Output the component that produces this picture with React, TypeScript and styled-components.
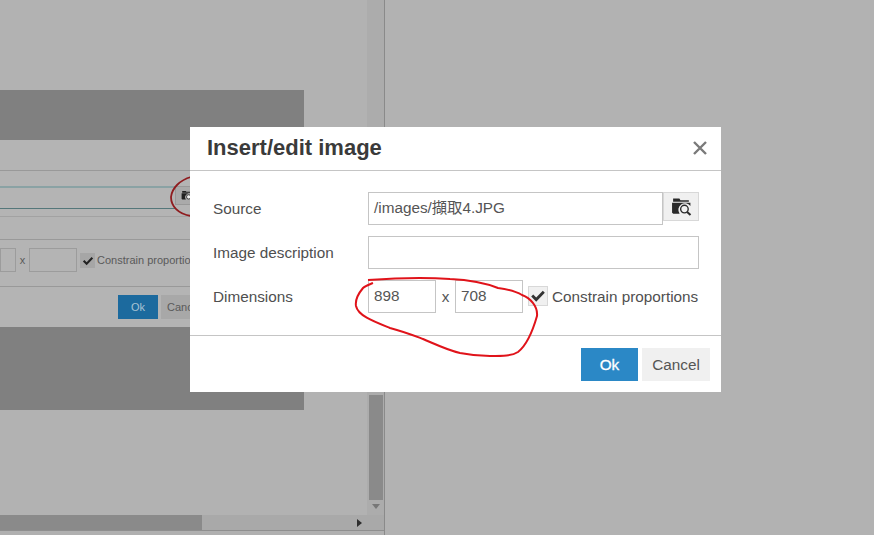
import React from "react";
import styled, { createGlobalStyle } from "styled-components";

const Global = createGlobalStyle`
  html, body { margin: 0; padding: 0; width: 874px; height: 535px; overflow: hidden; background: #b2b2b2; }
  * { box-sizing: border-box; }
`;

const Page = styled.div`
  position: relative; width: 874px; height: 535px; display: flex; overflow: hidden;
  font-family: "Liberation Sans", Arial, "Noto Sans CJK TC", sans-serif; background: #b2b2b2;
`;
const BackWindow = styled.div`
  width: 385px; height: 535px; display: grid; grid-template-columns: 367px 17px; grid-template-rows: 515px 15px 5px;
  border-right: 1px solid #8a8a8a;
`;
const BackContent = styled.div`
  padding-top: 90px; overflow: hidden;
`;
const DarkBlock = styled.div<{ $h: number }>`
  width: 304px; height: ${p => p.$h}px; background: #808080;
`;
const BackForm = styled.div`
  width: 304px; height: 187px; background: #b4b4b4; display: flex; flex-direction: column;
`;
const BackHead = styled.div`
  height: 31px; border-bottom: 1px solid #999;
`;
const BackSource = styled.div`
  height: 46px; padding-top: 15px; display: flex; align-items: flex-start; border-bottom: 1px solid #a2a2a2;
`;
const BackInput = styled.div`
  width: 175px; height: 23px; border-top: 2px solid #8aa2a4; border-bottom: 1px solid #55777a;
`;
const BackBrowse = styled.div`
  width: 20px; height: 19px; border: 1px solid #999; background: #aaa; display: flex; align-items: center; padding-left: 5px;
`;
const BackGap = styled.div`
  height: 23px; border-bottom: 1px solid #999;
`;
const BackDims = styled.div`
  height: 47px; padding-top: 8px; display: flex; align-items: flex-start; border-bottom: 1px solid #999;
  font-size: 11px; color: #5a5a5a;
`;
const BackDim = styled.div<{ $w: number }>`
  flex: none; width: ${p => p.$w}px; height: 24px; border: 1px solid #9c9c9c;
`;
const BackX = styled.span`
  flex: none; width: 13px; text-align: center; line-height: 24px; font-size: 11px;
`;
const BackCheck = styled.div`
  flex: none; width: 15px; height: 15px; margin: 5px 2px 0 3px; background: #a6a6a6; display: flex; align-items: center; justify-content: center; color: #222;
`;
const BackLabel = styled.span`
  line-height: 24px; white-space: nowrap; font-size: 11px;
`;
const BackFoot = styled.div`
  padding: 8px 0 0 118px; display: flex; gap: 3px;
`;
const BackOk = styled.div`
  width: 40px; height: 24px; background: #1c6a9e; color: #a9c3d4; font-size: 11px; line-height: 24px; text-align: center;
`;
const BackCancel = styled.div`
  width: 40px; height: 24px; background: #a8a8a8; color: #5a5a5a; font-size: 11px; line-height: 24px; padding-left: 6px;
`;
const VTrack = styled.div`
  background: #acacac; display: flex; flex-direction: column; align-items: center; justify-content: flex-end; padding-bottom: 6px; gap: 4px;
`;
const VThumb = styled.div`
  width: 14px; height: 105px; background: #8a8a8a;
`;
const DownArrow = styled.div`
  width: 0; height: 0; border-left: 4px solid transparent; border-right: 4px solid transparent; border-top: 5px solid #777;
`;
const HTrack = styled.div`
  background: #a9a9a9; display: flex; align-items: center; justify-content: space-between; padding-right: 5px;
`;
const HThumb = styled.div`
  width: 202px; height: 15px; background: #8a8a8a;
`;
const RightArrow = styled.div`
  width: 0; height: 0; border-top: 4px solid transparent; border-bottom: 4px solid transparent; border-left: 5px solid #2e2e2e;
`;
const Corner = styled.div`background: #a9a9a9;`;
const BottomEdge = styled.div`
  grid-column: 1 / 3; border-top: 1px solid #8f8f8f; background: #b0b0b0;
`;

const Annotations = styled.svg`
  position: absolute; left: 0; top: 0; width: 874px; height: 535px; pointer-events: none;
`;

const Modal = styled.div`
  position: absolute; left: 190px; top: 127px; width: 531px; height: 265px; background: #fff; color: #444;
  display: flex; flex-direction: column;
`;
const Header = styled.div`
  height: 44px; padding: 0 13px 2px 17px; border-bottom: 1px solid #c5c5c5; display: flex; align-items: center; justify-content: space-between;
`;
const Title = styled.div`
  font-size: 22px; font-weight: 700; color: #3a3a3a;
`;
const Body = styled.div`
  flex: none; height: 165px; padding: 21px 22px 0 23px; display: flex; flex-direction: column; gap: 11px; border-bottom: 1px solid #c5c5c5;
`;
const Row = styled.div`
  display: flex; align-items: flex-start; height: 33px; font-size: 15.3px;
`;
const Label = styled.div`
  flex: none; width: 155px; line-height: 33px; color: #4f4f4f;
`;
const Input = styled.div<{ $w?: number }>`
  ${p => (p.$w ? `flex: none; width: ${p.$w}px;` : "flex: 1;")}
  height: 33px; border: 1px solid #c5c5c5; padding-left: 5px; line-height: 30px; color: #555; white-space: nowrap;
`;
const Browse = styled.div`
  flex: none; width: 36px; height: 29px; border: 1px solid #d8d8d8; background: #f0f0f0; display: flex; align-items: center; justify-content: center;
`;
const Times = styled.span`
  flex: none; width: 19px; text-align: center; line-height: 33px; color: #555;
`;
const Check = styled.div`
  flex: none; width: 20px; height: 20px; margin: 6px 4px 0 5px; background: #f0f0f0; border: 1px solid #d8d8d8; display: flex; align-items: center; justify-content: center;
`;
const CheckLabel = styled.span`
  flex: none; line-height: 33px; white-space: nowrap; color: #4f4f4f;
`;
const Footer = styled.div`
  flex: 1; padding: 12px 11px 0 0; display: flex; justify-content: flex-end; gap: 4px;
`;
const OkButton = styled.div`
  width: 57px; height: 33px; background: #2b88c6; color: #fff; font-size: 15.3px; line-height: 33px; text-align: center; -webkit-text-stroke: 0.3px #fff;
`;
const CancelButton = styled.div`
  width: 68px; height: 33px; background: #f0f0f0; color: #555; font-size: 15.3px; line-height: 33px; text-align: center;
`;

const FolderSearch: React.FC<{ size: number; fill: string }> = ({ size, fill }) => (
  <svg width={size} height={size * 0.9} viewBox="0 0 20 18">
    <path d="M2 1.5h6l1 1.5h8v1.5H2z" fill={fill} />
    <path d="M1 5.5h17.5v3A6 6 0 0 0 8.2 16H2.2L1 15z" fill={fill} />
    <circle cx="12.8" cy="11.5" r="3.6" fill="#f0f0f0" stroke={fill} strokeWidth="1.3" />
    <path d="M15.4 14.2l3.2 3" stroke={fill} strokeWidth="1.9" />
  </svg>
);

const CheckIcon: React.FC<{ size: number; color: string }> = ({ size, color }) => (
  <svg width={size} height={size} viewBox="0 0 16 16">
    <path d="M1.2 8.6l2-2 3 3 6.6-6.9 2 2-8.6 9z" fill={color} />
  </svg>
);

export default function App() {
  return (
    <Page>
      <Global />
      <BackWindow>
        <BackContent>
          <DarkBlock $h={50} />
          <BackForm>
            <BackHead />
            <BackSource>
              <BackInput />
              <BackBrowse><FolderSearch size={12} fill="#222" /></BackBrowse>
            </BackSource>
            <BackGap />
            <BackDims>
              <BackDim $w={16} />
              <BackX>x</BackX>
              <BackDim $w={48} />
              <BackCheck><CheckIcon size={12} color="#222" /></BackCheck>
              <BackLabel>Constrain proportions</BackLabel>
            </BackDims>
            <BackFoot>
              <BackOk>Ok</BackOk>
              <BackCancel>Cancel</BackCancel>
            </BackFoot>
          </BackForm>
          <DarkBlock $h={83} />
        </BackContent>
        <VTrack>
          <VThumb />
          <DownArrow />
        </VTrack>
        <HTrack>
          <HThumb />
          <RightArrow />
        </HTrack>
        <Corner />
        <BottomEdge />
      </BackWindow>
      <Annotations viewBox="0 0 874 535">
        <path d="M191 177C180 180 172 188 171 197C171 206 178 214 191 216" fill="none" stroke="#8f1c1f" strokeWidth="1.8" />
      </Annotations>
      <Modal>
        <Header>
          <Title>Insert/edit image</Title>
          <svg width="16" height="16" viewBox="0 0 16 16">
            <path d="M2 2l12 12M14 2L2 14" stroke="#7a7a7a" strokeWidth="2.4" />
          </svg>
        </Header>
        <Body>
          <Row>
            <Label>Source</Label>
            <Input $w={295}>/images/擷取4.JPG</Input>
            <Browse><FolderSearch size={21} fill="#2a2a2a" /></Browse>
          </Row>
          <Row>
            <Label>Image description</Label>
            <Input />
          </Row>
          <Row>
            <Label>Dimensions</Label>
            <Input $w={68}>898</Input>
            <Times>x</Times>
            <Input $w={68}>708</Input>
            <Check><CheckIcon size={16} color="#333" /></Check>
            <CheckLabel>Constrain proportions</CheckLabel>
          </Row>
        </Body>
        <Footer>
          <OkButton>Ok</OkButton>
          <CancelButton>Cancel</CancelButton>
        </Footer>
      </Modal>
      <Annotations viewBox="0 0 874 535">
        <path d="M373 283C368 285 365 286 363 288C358 294 355 300 356 306C358 316 375 322 390 328C405 332 415 336 423 339C435 344 447 350 460 353C470 355 480 356 490 356C503 356 512 356 518 352C527 345 533 330 537 316C538 306 530 298 522 295C514 290 506 289 498 288C488 284 470 280 450 279C425 277 395 278 368 280" fill="none" stroke="#e0131a" strokeWidth="2" />
      </Annotations>
    </Page>
  );
}
